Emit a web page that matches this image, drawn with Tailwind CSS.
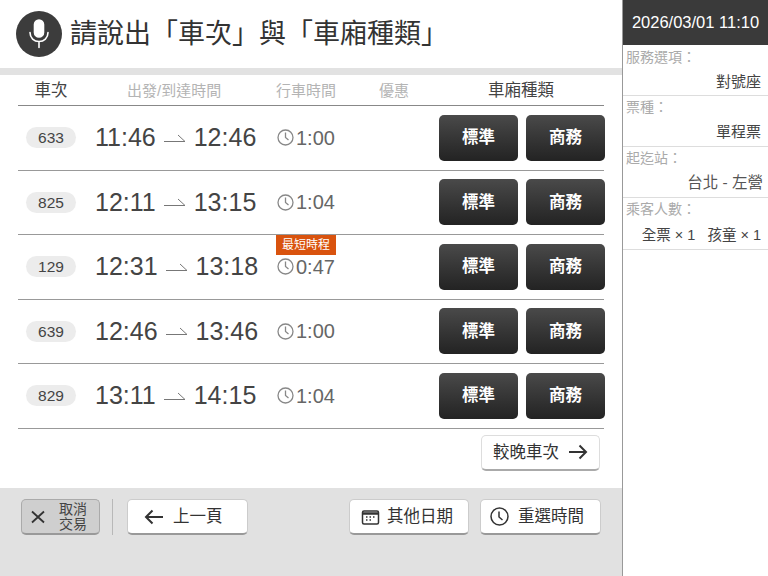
<!DOCTYPE html>
<html lang="zh-Hant">
<head>
    <meta charset="UTF-8">
    <title>車次選擇</title>
    <script src="https://cdn.jsdelivr.net/npm/@tailwindcss/browser@4"></script>
</head>
<body class="w-[768px] h-[576px] overflow-hidden bg-white text-[#333] font-['Liberation_Sans','Noto_Sans_CJK_TC',sans-serif]">
<div class="flex h-full">
    <!-- main column -->
    <div class="w-[622px] flex flex-col">
        <div class="h-[68px] flex items-center pl-4 gap-[8px]">
            <div class="w-[46px] h-[46px] rounded-full bg-[#3c3c3c] flex items-center justify-center">
                <svg width="24" height="30" viewBox="0 0 24 30" fill="none" stroke="#fff" stroke-width="1.6" stroke-linecap="round">
                    <rect x="7.5" y="1" width="9" height="17" rx="4.5" fill="#fff"/>
                    <path d="M3 13.5c0 5.500 4 9 9 9s9-3.500 9-9M12 22.500v6"/>
                </svg>
            </div>
            <h1 class="text-[27px] leading-none text-[#333] whitespace-nowrap">請說出「車次」與「車廂種類」</h1>
        </div>
        <div class="h-[7px] bg-[#e2e2e2]"></div>

        <div class="mx-[18px] w-[586px] flex-1 flex flex-col">
            <div class="h-[31px] grid grid-cols-[67px_191px_103px_91px_134px] items-center border-b border-[#888] text-[#b4b4b4] text-[15px] leading-none">
                <div class="text-[16.500px] text-[#444] text-center pr-[1px]">車次</div>
                <div class="pl-[42px] whitespace-nowrap">出發/到達時間</div>
                <div class="whitespace-nowrap">行車時間</div>
                <div>優惠</div>
                <div class="text-[16.500px] text-[#444] pl-[18px] whitespace-nowrap">車廂種類</div>
            </div>

            <div class="h-[64.5px] flex items-center border-b border-[#999] relative">
                <span class="ml-2 w-[50px] h-[21px] rounded-full bg-[#ececec] text-[15.500px] text-[#444] flex items-center justify-center">633</span>
                <span class="ml-[19px] w-[182px] flex items-center text-[25px] text-[#444]">11:46
                    <svg class="mx-[7px]" width="24" height="10" viewBox="0 0 24 10" fill="none" stroke="#777" stroke-width="1"><path d="M1 8.500h21L15 2"/></svg>12:46</span>
                <span class="flex items-center gap-[2px] text-[20px] text-[#666]">
                    <svg width="17" height="17" viewBox="0 0 17 17" fill="none" stroke="#888" stroke-width="1.300"><circle cx="8.500" cy="8.500" r="7.500"/><path d="M8.500 3.500V8.500l3 2.500"/></svg>1:00</span>
                <div class="ml-auto flex gap-2 -mr-[1px]">
                    <button class="w-[79px] h-[46px] rounded-[5px] bg-gradient-to-b from-[#4a4a4a] to-[#232323] text-white text-[16.500px] font-bold">標準</button>
                    <button class="w-[79px] h-[46px] rounded-[5px] bg-gradient-to-b from-[#4a4a4a] to-[#232323] text-white text-[16.500px] font-bold">商務</button>
                </div>
            </div>

            <div class="h-[64.5px] flex items-center border-b border-[#999] relative">
                <span class="ml-2 w-[50px] h-[21px] rounded-full bg-[#ececec] text-[15.500px] text-[#444] flex items-center justify-center">825</span>
                <span class="ml-[19px] w-[182px] flex items-center text-[25px] text-[#444]">12:11
                    <svg class="mx-[7px]" width="24" height="10" viewBox="0 0 24 10" fill="none" stroke="#777" stroke-width="1"><path d="M1 8.500h21L15 2"/></svg>13:15</span>
                <span class="flex items-center gap-[2px] text-[20px] text-[#666]">
                    <svg width="17" height="17" viewBox="0 0 17 17" fill="none" stroke="#888" stroke-width="1.300"><circle cx="8.500" cy="8.500" r="7.500"/><path d="M8.500 3.500V8.500l3 2.500"/></svg>1:04</span>
                <div class="ml-auto flex gap-2 -mr-[1px]">
                    <button class="w-[79px] h-[46px] rounded-[5px] bg-gradient-to-b from-[#4a4a4a] to-[#232323] text-white text-[16.500px] font-bold">標準</button>
                    <button class="w-[79px] h-[46px] rounded-[5px] bg-gradient-to-b from-[#4a4a4a] to-[#232323] text-white text-[16.500px] font-bold">商務</button>
                </div>
            </div>

            <div class="h-[64.5px] flex items-center border-b border-[#999] relative">
                <span class="ml-2 w-[50px] h-[21px] rounded-full bg-[#ececec] text-[15.500px] text-[#444] flex items-center justify-center">129</span>
                <span class="ml-[19px] w-[182px] flex items-center text-[25px] text-[#444]">12:31
                    <svg class="mx-[7px]" width="24" height="10" viewBox="0 0 24 10" fill="none" stroke="#777" stroke-width="1"><path d="M1 8.500h21L15 2"/></svg>13:18</span>
                <span class="flex items-center gap-[2px] text-[20px] text-[#666]">
                    <svg width="17" height="17" viewBox="0 0 17 17" fill="none" stroke="#888" stroke-width="1.300"><circle cx="8.500" cy="8.500" r="7.500"/><path d="M8.500 3.500V8.500l3 2.500"/></svg>0:47</span>
                <span class="absolute left-[258px] top-0 w-[60px] h-[20px] bg-[#d9530e] text-white text-[12px] leading-[20px] text-center">最短時程</span>
                <div class="ml-auto flex gap-2 -mr-[1px]">
                    <button class="w-[79px] h-[46px] rounded-[5px] bg-gradient-to-b from-[#4a4a4a] to-[#232323] text-white text-[16.500px] font-bold">標準</button>
                    <button class="w-[79px] h-[46px] rounded-[5px] bg-gradient-to-b from-[#4a4a4a] to-[#232323] text-white text-[16.500px] font-bold">商務</button>
                </div>
            </div>

            <div class="h-[64.5px] flex items-center border-b border-[#999] relative">
                <span class="ml-2 w-[50px] h-[21px] rounded-full bg-[#ececec] text-[15.500px] text-[#444] flex items-center justify-center">639</span>
                <span class="ml-[19px] w-[182px] flex items-center text-[25px] text-[#444]">12:46
                    <svg class="mx-[7px]" width="24" height="10" viewBox="0 0 24 10" fill="none" stroke="#777" stroke-width="1"><path d="M1 8.500h21L15 2"/></svg>13:46</span>
                <span class="flex items-center gap-[2px] text-[20px] text-[#666]">
                    <svg width="17" height="17" viewBox="0 0 17 17" fill="none" stroke="#888" stroke-width="1.300"><circle cx="8.500" cy="8.500" r="7.500"/><path d="M8.500 3.500V8.500l3 2.500"/></svg>1:00</span>
                <div class="ml-auto flex gap-2 -mr-[1px]">
                    <button class="w-[79px] h-[46px] rounded-[5px] bg-gradient-to-b from-[#4a4a4a] to-[#232323] text-white text-[16.500px] font-bold">標準</button>
                    <button class="w-[79px] h-[46px] rounded-[5px] bg-gradient-to-b from-[#4a4a4a] to-[#232323] text-white text-[16.500px] font-bold">商務</button>
                </div>
            </div>

            <div class="h-[64.5px] flex items-center border-b border-[#999] relative">
                <span class="ml-2 w-[50px] h-[21px] rounded-full bg-[#ececec] text-[15.500px] text-[#444] flex items-center justify-center">829</span>
                <span class="ml-[19px] w-[182px] flex items-center text-[25px] text-[#444]">13:11
                    <svg class="mx-[7px]" width="24" height="10" viewBox="0 0 24 10" fill="none" stroke="#777" stroke-width="1"><path d="M1 8.500h21L15 2"/></svg>14:15</span>
                <span class="flex items-center gap-[2px] text-[20px] text-[#666]">
                    <svg width="17" height="17" viewBox="0 0 17 17" fill="none" stroke="#888" stroke-width="1.300"><circle cx="8.500" cy="8.500" r="7.500"/><path d="M8.500 3.500V8.500l3 2.500"/></svg>1:04</span>
                <div class="ml-auto flex gap-2 -mr-[1px]">
                    <button class="w-[79px] h-[46px] rounded-[5px] bg-gradient-to-b from-[#4a4a4a] to-[#232323] text-white text-[16.500px] font-bold">標準</button>
                    <button class="w-[79px] h-[46px] rounded-[5px] bg-gradient-to-b from-[#4a4a4a] to-[#232323] text-white text-[16.500px] font-bold">商務</button>
                </div>
            </div>

            <div class="flex justify-end pt-[6px] pr-1">
                <button class="w-[119px] h-[36px] rounded-[5px] border border-[#ddd] border-b-2 border-b-[#aaa] bg-white text-[16.500px] text-[#333] flex items-center justify-center gap-[9px]">較晚車次
                    <svg width="20" height="16" viewBox="0 0 20 16" fill="none" stroke="#333" stroke-width="2"><path d="M1 8h17M11.500 1.500 18 8l-6.500 6.500"/></svg>
                </button>
            </div>
        </div>

        <div class="h-[88px] bg-[#e1e1e1] flex items-start pt-[11px] pl-[21px]">
            <button class="w-[79px] h-[36px] rounded-[5px] bg-[#cfcfcf] border border-[#aaa] border-b-2 border-b-[#999] flex items-center pl-[8px] gap-[13px]">
                <svg width="16" height="16" viewBox="0 0 16 16" fill="none" stroke="#333" stroke-width="1.800"><path d="M2 2.500l12 11M14 2.500l-12 11"/></svg>
                <span class="text-[14px] leading-[15px] text-[#444]">取消<br>交易</span>
            </button>
            <div class="w-[1px] h-[36px] bg-[#b8b8b8] ml-[12px]"></div>
            <button class="ml-[14px] w-[121px] h-[36px] rounded-[5px] bg-white border border-[#ccc] border-b-2 border-b-[#999] text-[16.500px] text-[#333] flex items-center pl-[16px] gap-[9px]">
                <svg width="20" height="16" viewBox="0 0 20 16" fill="none" stroke="#333" stroke-width="2"><path d="M19 8H2M8.500 1.500 2 8l6.500 6.500"/></svg>
                上一頁
            </button>
            <button class="ml-[101px] w-[120px] h-[36px] rounded-[5px] bg-white border border-[#ccc] border-b-2 border-b-[#999] text-[16.500px] text-[#333] flex items-center pl-[11px] gap-[7px]">
                <svg width="19" height="18" viewBox="0 0 18 18" fill="none" stroke="#333" stroke-width="1.500"><rect x="1" y="3" width="16" height="13" rx="1.500"/><path d="M1 5.500h16" stroke-width="2.500"/><path d="M4.500 9h1.500M8 9h1.500M11.500 9h1.500M4.500 12h1.500M8 12h1.500" stroke-width="1.300"/></svg>
                其他日期
            </button>
            <button class="ml-[11px] w-[121px] h-[36px] rounded-[5px] bg-white border border-[#ccc] border-b-2 border-b-[#999] text-[16.500px] text-[#333] flex items-center pl-[9px] gap-[9px]">
                <svg width="19" height="19" viewBox="0 0 19 19" fill="none" stroke="#333" stroke-width="1.500"><circle cx="9.500" cy="9.500" r="8.500"/><path d="M9 4.500V10l3.500 3"/></svg>
                重選時間
            </button>
        </div>
    </div>

    <!-- side panel -->
    <aside class="w-[146px] border-l border-[#999] flex flex-col">
        <div class="h-[45px] bg-[#3a3a3a] text-white text-[16.500px] flex items-center justify-center whitespace-nowrap">2026/03/01 11:10</div>
        <div class="h-[51px] border-b border-[#ddd] pl-[3px] pr-[7px] pt-[3px]">
            <div class="text-[14px] leading-[18px] text-[#aaa]">服務選項：</div>
            <div class="text-[15px] leading-[20px] mt-[6px] text-right text-[#444]">對號座</div>
        </div>
        <div class="h-[51px] border-b border-[#ddd] pl-[3px] pr-[7px] pt-[2px]">
            <div class="text-[14px] leading-[18px] text-[#aaa]">票種：</div>
            <div class="text-[15px] leading-[20px] mt-[6px] text-right text-[#444]">單程票</div>
        </div>
        <div class="h-[51px] border-b border-[#ddd] pl-[3px] pr-[5px] pt-[2px]">
            <div class="text-[14px] leading-[18px] text-[#aaa]">起迄站：</div>
            <div class="text-[15.500px] leading-[20px] mt-[6px] text-right text-[#555]">台北 - 左營</div>
        </div>
        <div class="h-[52px] border-b border-[#ddd] pl-[3px] pr-[7px] pt-[2px]">
            <div class="text-[14px] leading-[18px] text-[#aaa]">乘客人數：</div>
            <div class="text-[14.5px] leading-[20px] mt-[7px] text-right text-[#444] whitespace-nowrap">全票 × 1&nbsp;&nbsp;&nbsp;孩童 × 1</div>
        </div>
    </aside>
</div>
</body>
</html>
